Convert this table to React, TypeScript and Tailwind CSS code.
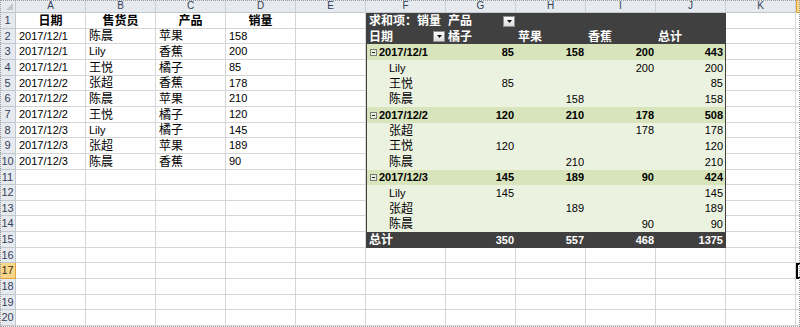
import React from "react";

const WCLS = [
  "w-[70px]",
  "w-[70px]",
  "w-[70px]",
  "w-[70px]",
  "w-[70px]",
  "w-[80px]",
  "w-[70px]",
  "w-[70px]",
  "w-[70px]",
  "w-[70px]",
  "w-[70px]",
  "w-[4px]",
];
const LETTERS = ["A", "B", "C", "D", "E", "F", "G", "H", "I", "J", "K", "L"];
const HCLS = [
  "h-[16px]", "h-[15px]", "h-[16px]", "h-[16px]", "h-[15px]",
  "h-[16px]", "h-[16px]", "h-[15px]", "h-[16px]", "h-[16px]",
  "h-[15px]", "h-[16px]", "h-[15px]", "h-[16px]", "h-[16px]",
  "h-[15px]", "h-[16px]", "h-[16px]", "h-[15px]", "h-[16px]",
];

const SRC: string[][] = [
  ["日期", "售货员", "产品", "销量"],
  ["2017/12/1", "陈晨", "苹果", "158"],
  ["2017/12/1", "Lily", "香蕉", "200"],
  ["2017/12/1", "王悦", "橘子", "85"],
  ["2017/12/2", "张超", "香蕉", "178"],
  ["2017/12/2", "陈晨", "苹果", "210"],
  ["2017/12/2", "王悦", "橘子", "120"],
  ["2017/12/3", "Lily", "橘子", "145"],
  ["2017/12/3", "张超", "苹果", "189"],
  ["2017/12/3", "陈晨", "香蕉", "90"],
];

type PRow = { kind: "group" | "detail"; label: string; v: string[] };
const PIVOT: PRow[] = [
  { kind: "group", label: "2017/12/1", v: ["85", "158", "200", "443"] },
  { kind: "detail", label: "Lily", v: ["", "", "200", "200"] },
  { kind: "detail", label: "王悦", v: ["85", "", "", "85"] },
  { kind: "detail", label: "陈晨", v: ["", "158", "", "158"] },
  { kind: "group", label: "2017/12/2", v: ["120", "210", "178", "508"] },
  { kind: "detail", label: "张超", v: ["", "", "178", "178"] },
  { kind: "detail", label: "王悦", v: ["120", "", "", "120"] },
  { kind: "detail", label: "陈晨", v: ["", "210", "", "210"] },
  { kind: "group", label: "2017/12/3", v: ["145", "189", "90", "424"] },
  { kind: "detail", label: "Lily", v: ["145", "", "", "145"] },
  { kind: "detail", label: "张超", v: ["", "189", "", "189"] },
  { kind: "detail", label: "陈晨", v: ["", "", "90", "90"] },
];

const isCJK = (s: string) => /[\u3000-\u9fff\uff00-\uffef]/.test(s);

function T({ s, bold }: { s: string; bold?: boolean }) {
  return (
    <span
      className={`${isCJK(s) ? "text-[12px]" : "text-[11px]"} ${bold ? "font-bold" : ""} whitespace-nowrap leading-none`}
    >
      {s}
    </span>
  );
}

function DropBtn() {
  return (
    <span className="flex h-[11px] w-[12px] shrink-0 items-center justify-center border border-[#8f8f8f] bg-gradient-to-b from-[#ffffff] to-[#dcdcdc]">
      <svg width="5" height="3" viewBox="0 0 5 3">
        <path d="M0 0h5L2.5 3z" fill="#111" />
      </svg>
    </span>
  );
}

function Collapse() {
  return (
    <span className="mr-[2px] flex h-[7px] w-[7px] shrink-0 items-center justify-center border border-[#7d7d7d] bg-[#e8eddc]">
      <span className="h-px w-[3px] bg-[#222]" />
    </span>
  );
}

const GRID = "border-r border-b border-[#d6d6d6]";
const DARK = "bg-[#404040] text-white";
const GROUP = "bg-[#d8e4bc]";
const DET = "bg-[#ecf2e0]";

function Cell({ r, c }: { r: number; c: number }) {
  const base = `flex h-full shrink-0 items-center ${WCLS[c]}`;
  if (c === 11) {
    if (r === 17) return <div className={`${base} border-l-2 border-t-2 border-b-2 border-black`} />;
    return <div className={`${base} border-b border-[#d6d6d6]`} />;
  }
  if (c >= 5 && c <= 9 && r >= 1 && r <= 15) {
    const edge = `${c === 5 ? "border-l border-[#404040]" : ""} ${c === 9 ? "border-r border-[#404040]" : ""}`;
    if (r === 1) {
      if (c === 5)
        return (
          <div className={`${base} ${DARK} ${edge} pl-[2px]`}>
            <T s="求和项：销量" bold />
          </div>
        );
      if (c === 6)
        return (
          <div className={`${base} ${DARK} justify-between pl-[2px] pr-[1px]`}>
            <T s="产品" bold />
            <DropBtn />
          </div>
        );
      return <div className={`${base} ${DARK} ${edge}`} />;
    }
    if (r === 2) {
      if (c === 5)
        return (
          <div className={`${base} ${DARK} ${edge} justify-between pl-[2px] pr-[1px]`}>
            <T s="日期" bold />
            <DropBtn />
          </div>
        );
      const lab = ["橘子", "苹果", "香蕉", "总计"][c - 6];
      return (
        <div className={`${base} ${DARK} ${edge} pl-[2px]`}>
          <T s={lab} bold />
        </div>
      );
    }
    if (r === 15) {
      if (c === 5)
        return (
          <div className={`${base} ${DARK} ${edge} pl-[2px]`}>
            <T s="总计" bold />
          </div>
        );
      const tot = ["350", "557", "468", "1375"][c - 6];
      return (
        <div className={`${base} ${DARK} ${edge} justify-end pr-[2px]`}>
          <T s={tot} bold />
        </div>
      );
    }
    const p = PIVOT[r - 3];
    const bg = p.kind === "group" ? GROUP : DET;
    const bold = p.kind === "group";
    if (c === 5) {
      return (
        <div className={`${base} ${bg} ${edge} ${p.kind === "group" ? "pl-[3px]" : "pl-[22px]"} text-black`}>
          {p.kind === "group" && <Collapse />}
          <T s={p.label} bold={bold} />
        </div>
      );
    }
    return (
      <div className={`${base} ${bg} ${edge} justify-end pr-[2px] text-black`}>
        <T s={p.v[c - 6]} bold={bold} />
      </div>
    );
  }
  if (r >= 1 && r <= 10 && c <= 3) {
    const s = SRC[r - 1][c];
    if (r === 1)
      return (
        <div className={`${base} ${GRID} justify-center text-black`}>
          <T s={s} bold />
        </div>
      );
    return (
      <div className={`${base} ${GRID} pl-[3px] text-black`}>
        <T s={s} />
      </div>
    );
  }
  return <div className={`${base} ${GRID}`} />;
}

export default function App() {
  return (
    <div className="relative h-[327px] w-[800px] overflow-hidden bg-white font-['Liberation_Sans','Noto_Sans_CJK_SC',sans-serif]">
      <div className="flex h-[13px]">
        <div className="flex h-full w-[16px] shrink-0 items-end justify-end border-r border-b border-[#c2c8d0] bg-[#e6eaef] p-[2px]">
          <svg width="7" height="7" viewBox="0 0 7 7">
            <path d="M7 0V7H0z" fill="#c3c8ce" />
          </svg>
        </div>
        {LETTERS.map((l, i) => (
          <div
            key={l}
            className={`flex h-full shrink-0 items-center justify-center border-b text-[10px] leading-none ${WCLS[i]} ${
              i === 11
                ? "border-l border-[#e3a53b] border-b-[#e3a53b] bg-[#f9d78a]"
                : "border-r border-[#c9cfd6] border-b-[#c2c8d0] bg-[#e6eaef] text-[#33415a]"
            }`}
          >
            {i === 11 ? "" : l}
          </div>
        ))}
      </div>
      {HCLS.map((h, ri) => {
        const r = ri + 1;
        const sel = r === 17;
        return (
          <div key={r} className={`flex ${h}`}>
            <div
              className={`flex h-full w-[16px] shrink-0 items-center justify-center border-r border-b text-[11px] leading-none ${
                sel
                  ? "border-[#e3a53b] bg-[#f9d78a] text-[#3a3020]"
                  : "border-[#c2c8d0] bg-[#e6eaef] text-[#33415a]"
              }`}
            >
              {r}
            </div>
            {WCLS.map((_, c) => (
              <Cell key={c} r={r} c={c} />
            ))}
          </div>
        );
      })}
      <div className="pointer-events-none absolute inset-0 border border-dotted border-[#9a9a9a]" />
    </div>
  );
}
